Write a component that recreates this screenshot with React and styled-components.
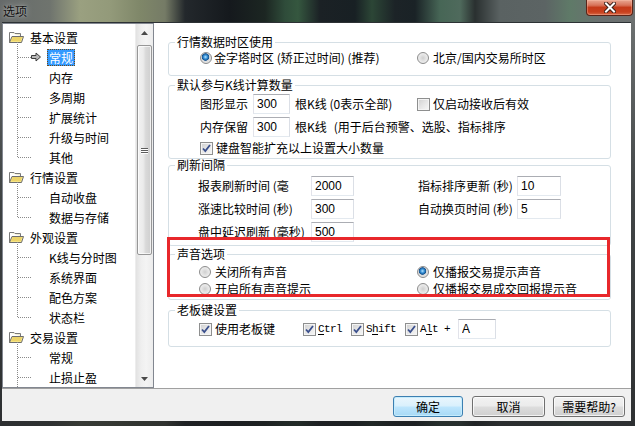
import React from 'react';
import styled, { createGlobalStyle, css } from 'styled-components';

const CJK = `"Noto Sans CJK SC", "Liberation Sans", sans-serif`;

const GlobalStyle = createGlobalStyle`
  html, body { margin: 0; padding: 0; background: #3a3f40; }
  body { font-family: ${CJK}; font-size: 12px; color: #000; }
`;

const Window = styled.div`
  width: 635px;
  height: 426px;
  box-sizing: border-box;
  padding: 0 4px 5px 2px;
  display: flex;
  flex-direction: column;
  background:
    linear-gradient(180deg, rgba(0,0,0,0) 0, rgba(0,0,0,0) 22px, rgba(30,34,36,0.55) 200px, rgba(30,32,34,0.8) 426px),
    linear-gradient(90deg, #666a6a 0, #6f746e 50px, #9aa080 80px, #939a7a 110px, #7f8769 140px, #757b66 165px, #23282c 185px, #15191d 230px, #1c2622 265px, #2f4c3a 285px, #35573f 298px, #1b2125 320px, #182024 355px, #2c4636 372px, #1c2327 395px, #1a2226 415px, #476656 440px, #4f6a5c 460px, #2a3030 475px, #5a6262 500px, #5c6464 545px, #5f7a68 570px, #6a7070 600px, #6c7070 635px);
`;

const TitleBar = styled.div`
  height: 22px;
  display: flex;
  align-items: flex-start;
`;

const Title = styled.span`
  margin: 3px 0 0 1px;
  font-size: 12px;
  line-height: 16px;
  color: #101010;
  text-shadow: 0 0 6px rgba(255,255,255,0.55), 0 0 2px rgba(255,255,255,0.35);
`;

const CloseButton = styled.div`
  margin-left: auto;
  margin-right: -2px;
  width: 47px;
  height: 16px;
  box-sizing: border-box;
  border: 1px solid #5a2418;
  border-top: none;
  border-radius: 0 0 4px 4px;
  background: linear-gradient(180deg, #e9a792 0, #d8735a 35%, #c53a1a 50%, #c8401e 80%, #d86a48 100%);
  box-shadow: inset 0 0 0 1px rgba(255,200,180,0.35);
  display: flex;
  align-items: center;
  justify-content: center;
`;

const Client = styled.div`
  flex: 1;
  display: flex;
  flex-direction: column;
  border-top: 1px solid #2c3134;
  background: #f0f0f0;
  min-height: 0;
`;

const Main = styled.div`
  height: 365px;
  display: flex;
`;

/* ---------- Tree ---------- */
const TreeBox = styled.div`
  width: 152px;
  box-sizing: border-box;
  border: 1px solid #828790;
  background: #fff;
  display: flex;
  overflow: hidden;
`;

const TreeList = styled.div`
  flex: 1;
  padding-top: 3px;
  overflow: hidden;
`;

const ParentRow = styled.div`
  height: 20px;
  display: flex;
  align-items: center;
  padding-left: 6px;
  gap: 6px;
  white-space: nowrap;
`;

const ChildList = styled.div`
  position: relative;
  &::before {
    content: '';
    position: absolute;
    left: 14px;
    top: -5px;
    bottom: ${p => (p.$open ? '-20px' : '10px')};
    border-left: 1px dotted #8a8a8a;
  }
`;

const ChildRow = styled.div`
  position: relative;
  height: 20px;
  display: flex;
  align-items: center;
  padding-left: 28px;
  white-space: nowrap;
  &::after {
    content: '';
    position: absolute;
    left: 15px;
    top: 10px;
    width: 13px;
    border-top: 1px dotted #8a8a8a;
  }
`;

const IconSlot = styled.span`
  width: 16px;
  height: 12px;
  display: flex;
  align-items: center;
`;

const NodeLabel = styled.span`
  height: 17px;
  box-sizing: border-box;
  line-height: 15px;
  padding: 0 1px;
  border: 1px solid transparent;
  ${p => p.$selected && css`
    background: #3399ff;
    color: #fff;
    border: 1px dotted #6b4a1a;
  `}
`;

const ScrollBar = styled.div`
  width: 17px;
  display: flex;
  flex-direction: column;
  background: linear-gradient(90deg, #e2e2e2 0, #efefef 30%, #f4f4f4 60%, #ececec 100%);
  border-left: 1px solid #ededed;
`;

const ScrollArrow = styled.div`
  height: 17px;
  display: flex;
  align-items: center;
  justify-content: center;
`;

const ScrollTrack = styled.div`
  flex: 1;
  padding: 4px 1px 0 1px;
`;

const Thumb = styled.div`
  height: 210px;
  box-sizing: border-box;
  border: 1px solid #979797;
  border-radius: 2px;
  background: linear-gradient(90deg, #f2f2f2 0, #ebebeb 40%, #d9d9d9 60%, #cfcfcf 100%);
  box-shadow: inset 0 0 0 1px rgba(255,255,255,0.7);
  display: flex;
  flex-direction: column;
  align-items: center;
  justify-content: center;
  gap: 1px;
`;

const Grip = styled.span`
  width: 7px;
  height: 1px;
  background: #5c5c5c;
  box-shadow: 0 1px 0 #fff;
`;

/* ---------- Panel ---------- */
const Panel = styled.div`
  flex: 1;
  position: relative;
  background: #fff;
  padding: 11px 20px 0 14px;
  display: flex;
  flex-direction: column;
`;

const Group = styled.fieldset`
  margin: ${p => p.$mt || 0}px 0 0 0;
  padding: 0;
  border: 1px solid #d5dfe5;
  border-radius: 3px;
  min-width: 0;
`;

const Legend = styled.legend`
  margin-left: 6px;
  padding: 0 2px;
  font-size: 12px;
  line-height: 16px;
  color: #000;
`;

const Body = styled.div`
  padding: ${p => p.$pad};
  display: flex;
  flex-direction: column;
  gap: ${p => p.$gap || 0}px;
`;

const Row = styled.div`
  height: ${p => p.$h || 16}px;
  display: flex;
  align-items: center;
  white-space: nowrap;
`;

const Cell = styled.div`
  width: ${p => p.$w}px;
  flex: none;
  display: flex;
  align-items: center;
`;

const Text = styled.span`
  line-height: 16px;
  ${p => p.$w && css`width: ${p.$w}px; flex: none;`}
  ${p => p.$ml && css`margin-left: ${p.$ml}px;`}
`;

const Choice = styled.label`
  display: flex;
  align-items: center;
  gap: ${p => p.$gap ?? 3}px;
  line-height: 16px;
  white-space: nowrap;
`;

const RadioDot = styled.span`
  width: 12px;
  height: 12px;
  flex: none;
  border-radius: 50%;
  box-sizing: border-box;
  border: 1px solid #8c8c8c;
  background: radial-gradient(circle at 50% 50%, #cfcfcf 0, #e4e4e4 45%, #f6f6f6 100%);
  ${p => p.$checked && css`
    background: radial-gradient(circle at 45% 40%, #b8e4ff 0, #3d96da 22%, #14528f 42%, #dcdcdc 50%, #eeeeee 100%);
  `}
`;

const Box = styled.span`
  width: 13px;
  height: 13px;
  flex: none;
  box-sizing: border-box;
  border: 1px solid #8e8f8f;
  background: linear-gradient(135deg, #cfcfcf 0, #e6e6e6 50%, #f7f7f7 100%);
  box-shadow: inset 0 0 0 1px #f4f4f4;
  display: flex;
  align-items: center;
  justify-content: center;
`;

const Input = styled.input`
  width: ${p => p.$w}px;
  height: 20px;
  box-sizing: border-box;
  margin: 0;
  flex: none;
  border: 1px solid;
  border-color: #abadb3 #dbdfe6 #e3e9ef #e2e3ea;
  padding: 0 3px;
  font: 12px "Liberation Sans", sans-serif;
  color: #000;
  background: #fff;
  outline: none;
`;

const Mono = styled.span`
  font-family: "Liberation Mono", monospace;
  font-size: 11px;
  letter-spacing: -0.6px;
  line-height: 16px;
  u { text-decoration: underline; text-underline-offset: 2px; }
`;

const Annotation = styled.div`
  position: absolute;
  left: 13px;
  top: 214px;
  width: 443px;
  height: 60px;
  box-sizing: border-box;
  border: 3px solid #e8282b;
  pointer-events: none;
`;

/* ---------- Buttons ---------- */
const ButtonBar = styled.div`
  flex: 1;
  border-top: 1px solid #a0a0a0;
  display: flex;
  justify-content: flex-end;
  align-items: flex-start;
  padding: 7px 6px 0 0;
  gap: 9px;
`;

const Button = styled.div`
  width: ${p => p.$w}px;
  height: 21px;
  box-sizing: border-box;
  border: 1px solid #707070;
  border-radius: 3px;
  background: linear-gradient(180deg, #f2f2f2 0, #ebebeb 48%, #dddddd 52%, #cfcfcf 100%);
  box-shadow: inset 0 0 0 1px rgba(255,255,255,0.75);
  display: flex;
  align-items: center;
  justify-content: center;
  font-size: 12px;
  ${p => p.$primary && css`
    border-color: #3c7fb1;
    background: linear-gradient(180deg, #eaf6fd 0, #d9f0fc 48%, #bee6fd 52%, #a7d9f5 100%);
    box-shadow: inset 0 0 0 1px #c6ecfc;
  `}
  ${p => p.$ml && css`margin-left: ${p.$ml}px;`}
`;

/* ---------- Icons ---------- */
const FolderIcon = () => (
  <svg width="15" height="12" viewBox="0 0 15 12">
    <path d="M0.5 1.5 H5 L6 2.5 H11.5 V5" fill="#f3eed0" stroke="#7a7a7a" />
    <path d="M0.5 1.5 V11.5 H12" fill="none" stroke="#7a7a7a" />
    <path d="M3 5.5 H14.5 L12.5 11.5 H0.5 Z" fill="#f6e486" stroke="#6e6e6e" />
    <path d="M3.5 7 H12.5 M2.5 9 H12" stroke="#e2c24a" strokeWidth="1" />
  </svg>
);

const ArrowIcon = () => (
  <svg width="10" height="10" viewBox="0 0 10 10">
    <path d="M0.5 3.5 H5 V1 L9.5 5 L5 9 V6.5 H0.5 Z" fill="#b9b9b9" stroke="#3d3d3d" strokeLinejoin="miter" />
  </svg>
);

const Tri = ({ down }) => (
  <svg width="7" height="4" viewBox="0 0 7 4">
    <path d={down ? 'M0 0 H7 L3.5 4 Z' : 'M0 4 H7 L3.5 0 Z'} fill="#4a4a4a" />
  </svg>
);

const Check = () => (
  <svg width="9" height="9" viewBox="0 0 9 9">
    <path d="M1 4.5 L3.3 7 L8 1" fill="none" stroke="#3a4f8c" strokeWidth="1.8" />
  </svg>
);

const CloseX = () => (
  <svg width="12" height="11" viewBox="0 0 12 11">
    <path d="M2 1.5 L10 9.5 M10 1.5 L2 9.5" stroke="#3b1d16" strokeWidth="4" strokeLinecap="square" />
    <path d="M2 1.5 L10 9.5 M10 1.5 L2 9.5" stroke="#ffffff" strokeWidth="2" strokeLinecap="square" />
  </svg>
);

const Radio = ({ checked, children, gap }) => (
  <Choice $gap={gap}>
    <RadioDot $checked={checked} />
    <span>{children}</span>
  </Choice>
);

const CheckBox = ({ checked, children, gap }) => (
  <Choice $gap={gap}>
    <Box>{checked && <Check />}</Box>
    {children}
  </Choice>
);

const tree = [
  { label: '基本设置', children: ['常规', '内存', '多周期', '扩展统计', '升级与时间', '其他'] },
  { label: '行情设置', children: ['自动收盘', '数据与存储'] },
  { label: '外观设置', children: ['K线与分时图', '系统界面', '配色方案', '状态栏'] },
  { label: '交易设置', children: ['常规', '止损止盈'], open: true },
];

export default function App() {
  return (
    <>
      <GlobalStyle />
      <Window>
        <TitleBar>
          <Title>选项</Title>
          <CloseButton><CloseX /></CloseButton>
        </TitleBar>
        <Client>
          <Main>
            <TreeBox>
              <TreeList>
                {tree.map((g, gi) => (
                  <div key={gi}>
                    <ParentRow>
                      <FolderIcon />
                      <span>{g.label}</span>
                    </ParentRow>
                    <ChildList $open={g.open}>
                      {g.children.map((c, ci) => {
                        const sel = gi === 0 && ci === 0;
                        return (
                          <ChildRow key={ci}>
                            <IconSlot>{sel && <ArrowIcon />}</IconSlot>
                            <NodeLabel $selected={sel}>{c}</NodeLabel>
                          </ChildRow>
                        );
                      })}
                    </ChildList>
                  </div>
                ))}
              </TreeList>
              <ScrollBar>
                <ScrollArrow><Tri /></ScrollArrow>
                <ScrollTrack>
                  <Thumb><Grip /><Grip /><Grip /></Thumb>
                </ScrollTrack>
                <ScrollArrow><Tri down /></ScrollArrow>
              </ScrollBar>
            </TreeBox>

            <Panel>
              <Group>
                <Legend>行情数据时区使用</Legend>
                <Body $pad="0 0 9px 31px">
                  <Row>
                    <Cell $w={217}><Radio checked gap={2}>金字塔时区 (矫正过时间) (推荐)</Radio></Cell>
                    <Radio gap={4}>北京/国内交易所时区</Radio>
                  </Row>
                </Body>
              </Group>

              <Group $mt={1}>
                <Legend>默认参与K线计算数量</Legend>
                <Body $pad="1px 0 2px 31px" $gap={3}>
                  <Row $h={20}>
                    <Cell $w={217}>
                      <Text $w={53}>图形显示</Text>
                      <Input $w={37} readOnly value="300" />
                      <Text $ml={5}>根K线 (0表示全部)</Text>
                    </Cell>
                    <CheckBox gap={3}><span>仅启动接收后有效</span></CheckBox>
                  </Row>
                  <Row $h={20}>
                    <Text $w={53}>内存保留</Text>
                    <Input $w={37} readOnly value="300" />
                    <Text $ml={5}>根K线</Text>
                    <Text $ml={7}>(用于后台预警、选股、指标排序</Text>
                  </Row>
                  <Row>
                    <CheckBox checked gap={3}><span>键盘智能扩充以上设置大小数量</span></CheckBox>
                  </Row>
                </Body>
              </Group>

              <Group $mt={-2}>
                <Legend>刷新间隔</Legend>
                <Body $pad="3px 0 3px 29px" $gap={3}>
                  <Row $h={20}>
                    <Cell $w={220}>
                      <Text $w={113}>报表刷新时间 (毫</Text>
                      <Input $w={43} readOnly value="2000" />
                    </Cell>
                    <Text $w={99}>指标排序更新 (秒)</Text>
                    <Input $w={44} readOnly value="10" />
                  </Row>
                  <Row $h={20}>
                    <Cell $w={220}>
                      <Text $w={113}>涨速比较时间 (秒)</Text>
                      <Input $w={43} readOnly value="300" />
                    </Cell>
                    <Text $w={99}>自动换页时间 (秒)</Text>
                    <Input $w={44} readOnly value="5" />
                  </Row>
                  <Row $h={20}>
                    <Cell $w={220}>
                      <Text $w={113}>盘中延迟刷新 (毫秒)</Text>
                      <Input $w={43} readOnly value="500" />
                    </Cell>
                  </Row>
                </Body>
              </Group>

              <Group $mt={0}>
                <Legend>声音选项</Legend>
                <Body $pad="2px 0 2px 30px" $gap={1}>
                  <Row>
                    <Cell $w={218}><Radio gap={4}>关闭所有声音</Radio></Cell>
                    <Radio checked gap={4}>仅播报交易提示声音</Radio>
                  </Row>
                  <Row>
                    <Cell $w={218}><Radio gap={4}>开启所有声音提示</Radio></Cell>
                    <Radio gap={4}>仅播报交易成交回报提示音</Radio>
                  </Row>
                </Body>
              </Group>

              <Group $mt={2}>
                <Legend>老板键设置</Legend>
                <Body $pad="1px 0 7px 30px">
                  <Row $h={20}>
                    <Cell $w={104}><CheckBox checked><span>使用老板键</span></CheckBox></Cell>
                    <Cell $w={48}><CheckBox checked gap={2}><Mono><u>C</u>trl</Mono></CheckBox></Cell>
                    <Cell $w={54}><CheckBox checked gap={2}><Mono>S<u>h</u>ift</Mono></CheckBox></Cell>
                    <Cell $w={53}><CheckBox checked gap={2}><Mono>A<u>l</u>t +</Mono></CheckBox></Cell>
                    <Input $w={38} readOnly value="A" />
                  </Row>
                </Body>
              </Group>

              <Annotation />
            </Panel>
          </Main>

          <ButtonBar>
            <Button $primary $w={70}>确定</Button>
            <Button $w={73}>取消</Button>
            <Button $w={72} $ml={-1}>需要帮助?</Button>
          </ButtonBar>
        </Client>
      </Window>
    </>
  );
}
